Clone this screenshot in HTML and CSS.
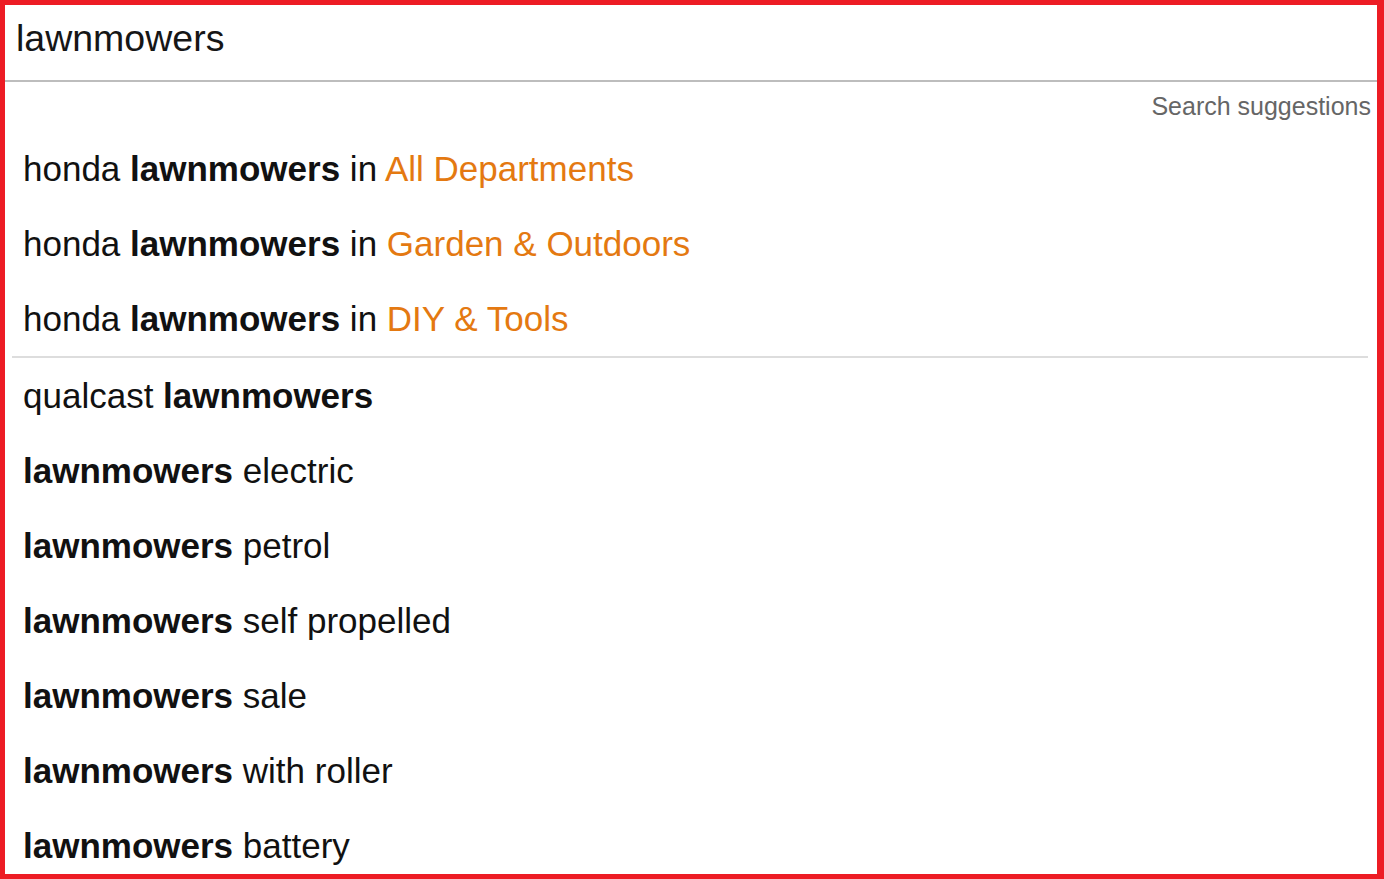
FILE: index.html
```html
<!DOCTYPE html>
<html lang="en">
<head>
  <meta charset="UTF-8" />
  <meta name="viewport" content="width=device-width, initial-scale=1.0" />
  <title>Search suggestions</title>
  <link rel="stylesheet" href="styles.css">
</head>
<body>
  <div class="frame">
    <div class="search">lawnmowers</div>

    <div class="suggestions">
      <div class="label">Search suggestions</div>

      <ul class="list">
        <li>honda <b>lawnmowers</b> in <span class="dept">All Departments</span></li>
        <li>honda <b>lawnmowers</b> in <span class="dept">Garden &amp; Outdoors</span></li>
        <li>honda <b>lawnmowers</b> in <span class="dept">DIY &amp; Tools</span></li>
      </ul>

      <div class="divider"></div>

      <ul class="list">
        <li>qualcast <b>lawnmowers</b></li>
        <li><b>lawnmowers</b> electric</li>
        <li><b>lawnmowers</b> petrol</li>
        <li><b>lawnmowers</b> self propelled</li>
        <li><b>lawnmowers</b> sale</li>
        <li><b>lawnmowers</b> with roller</li>
        <li><b>lawnmowers</b> battery</li>
      </ul>
    </div>
  </div>
</body>
</html>
```

FILE: styles.css
```css
html, body {
  margin: 0;
  height: 100%;
}

body {
  font-family: 'Liberation Sans', Arial, sans-serif;
  background-color: #fff;
  color: #111;
}

.frame {
  box-sizing: border-box;
  height: 100vh;
  border: 5px solid #ed1c24;
  border-right-width: 7px;
  overflow: hidden;
  display: flex;
  flex-direction: column;
}

.search {
  padding: 0 0 8px 11px;
  line-height: 67px;
  font-size: 37.5px;
  color: #161616;
  border-bottom: 2px solid #bdbdbd;
}

.label {
  text-align: right;
  font-size: 25px;
  line-height: 48px;
  padding: 0 6px 1px 0;
  color: #666;
}

.list {
  list-style: none;
  margin: 0;
  padding: 0;
}

.list li {
  font-size: 35px;
  line-height: 75px;
  padding-left: 18px;
  white-space: nowrap;
}

.list b {
  font-weight: bold;
}

.dept {
  color: #e47911;
}

.divider {
  height: 2px;
  background-color: #ddd;
  margin: 0 9px 0 7px;
}
```
